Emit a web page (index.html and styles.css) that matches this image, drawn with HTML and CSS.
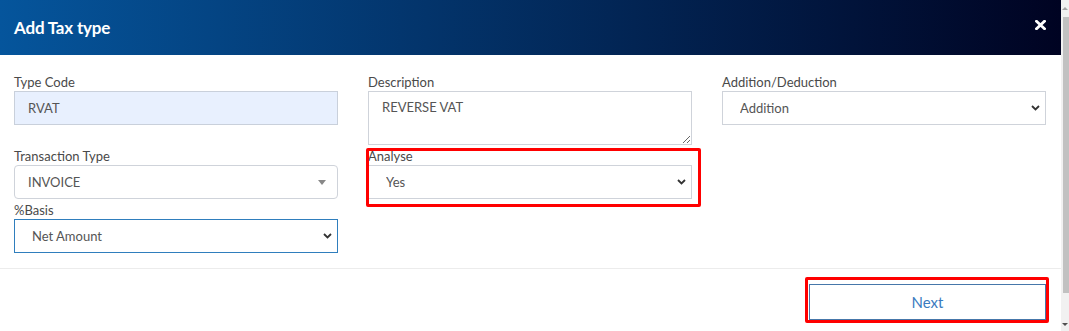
FILE: index.html
```html
<!DOCTYPE html>
<html lang="en">
<head>
    <meta charset="UTF-8">
    <meta name="viewport" content="width=device-width, initial-scale=1.0">
    <title>Add Tax type</title>
    <link rel="stylesheet" href="styles.css">
</head>
<body>
    <div class="page">
        <!-- Modal dialog -->
        <div class="modal">
            <div class="modal-header">
                <h4>Add Tax type</h4>
                <span class="close-btn" title="Close">
                    <svg width="11" height="10" viewBox="0 0 11 10">
                        <path d="M1.5 1.2L9.5 8.8M9.5 1.2L1.5 8.8" stroke="#fff" stroke-width="2.8" stroke-linecap="square"/>
                    </svg>
                </span>
            </div>

            <div class="modal-body">
                <!-- First row of fields -->
                <div class="form-row">
                    <div class="form-group">
                        <label for="typeCode">Type Code</label>
                        <input id="typeCode" class="form-control autofilled" value="RVAT">
                    </div>
                    <div class="form-group">
                        <label for="description">Description</label>
                        <textarea id="description" class="form-control area">REVERSE VAT</textarea>
                    </div>
                    <div class="form-group">
                        <label for="addDed">Addition/Deduction</label>
                        <div class="select-wrap">
                            <select id="addDed" class="form-control select">
                                <option>Addition</option>
                                <option>Deduction</option>
                            </select>
                            <svg class="chevron" width="9" height="6" viewBox="0 0 9 6"><path d="M1 1l3.5 3.5L8 1" fill="none" stroke="#333" stroke-width="1.8"/></svg>
                        </div>
                    </div>
                </div>

                <!-- Second row of fields -->
                <div class="form-row">
                    <div class="form-group">
                        <label>Transaction Type</label>
                        <div class="select2">
                            <span>INVOICE</span>
                            <span class="caret"></span>
                        </div>
                        <label for="basis">%Basis</label>
                        <div class="select-wrap">
                            <select id="basis" class="form-control select focused">
                                <option>Net Amount</option>
                                <option>Gross Amount</option>
                            </select>
                            <svg class="chevron" width="9" height="6" viewBox="0 0 9 6"><path d="M1 1l3.5 3.5L8 1" fill="none" stroke="#333" stroke-width="1.8"/></svg>
                        </div>
                    </div>
                    <div class="form-group marked marked-analyse">
                        <label for="analyse">Analyse</label>
                        <div class="select-wrap">
                            <select id="analyse" class="form-control select">
                                <option>Yes</option>
                                <option>No</option>
                            </select>
                            <svg class="chevron" width="9" height="6" viewBox="0 0 9 6"><path d="M1 1l3.5 3.5L8 1" fill="none" stroke="#333" stroke-width="1.8"/></svg>
                        </div>
                    </div>
                    <div class="form-group"></div>
                </div>
            </div>

            <div class="modal-footer">
                <div class="marked marked-next">
                    <button class="btn-next">Next</button>
                </div>
            </div>
        </div>

        <!-- Page scrollbar -->
        <div class="scrollbar">
            <span class="sb-arrow up"></span>
            <span class="sb-thumb"></span>
            <span class="sb-arrow down"></span>
        </div>
    </div>
</body>
</html>
```

FILE: styles.css
```css
/* Page basics */
body {
    margin: 0;
    font-family: "Lato", "Open Sans", Arial, sans-serif;
    background: #fff;
    overflow: hidden;
}

.page {
    display: flex;
    height: 331px;
}

/* Modal */
.modal {
    flex: 1;
    background: #fff;
}

.modal-header {
    height: 55px;
    box-sizing: border-box;
    padding: 0 15px 0 14px;
    display: flex;
    justify-content: space-between;
    align-items: center;
    background: linear-gradient(to right, #05559c, #000322);
}

.modal-header h4 {
    margin: 0;
    color: #fff;
    font-size: 17px;
    font-weight: bold;
    letter-spacing: -0.2px;
}

.close-btn {
    display: flex;
    margin-top: -6px;
    cursor: pointer;
}

.modal-body {
    padding: 19px 15px 15px 14px;
}

/* Three equal columns */
.form-row {
    display: grid;
    grid-template-columns: repeat(3, 1fr);
    column-gap: 30px;
    align-items: start;
}

.form-row + .form-row {
    margin-top: 3px;
}

label {
    display: block;
    font-size: 13px;
    line-height: 16px;
    padding-bottom: 1px;
    color: #4a4a4a;
}

.form-control {
    display: block;
    width: 100%;
    height: 34px;
    box-sizing: border-box;
    margin: 0;
    padding: 0 13px;
    font-family: inherit;
    font-size: 13px;
    color: #555;
    background: #fff;
    border: 1px solid #cfd3da;
    border-radius: 0;
    outline: none;
}

.autofilled {
    background: #e8f0fe;
    border-color: #c9d0db;
}

.area {
    height: 54px;
    padding-top: 7px;
    line-height: 17px;
    resize: vertical;
}

/* Native selects with a drawn chevron */
.select-wrap {
    position: relative;
}

.select {
    appearance: none;
    -webkit-appearance: none;
    padding-left: 17px;
}

.select.focused {
    border-color: #2f7ebd;
}

.chevron {
    position: absolute;
    right: 6px;
    top: 14px;
    pointer-events: none;
}

/* select2 style box */
.select2 {
    display: flex;
    justify-content: space-between;
    align-items: center;
    height: 34px;
    box-sizing: border-box;
    padding: 0 11px 0 13px;
    font-size: 13px;
    color: #555;
    border: 1px solid #cfd3da;
    border-radius: 4px;
    margin-bottom: 3px;
}

.caret {
    width: 0;
    height: 0;
    border-left: 4px solid transparent;
    border-right: 4px solid transparent;
    border-top: 5px solid #888;
}

/* Footer */
.modal-footer {
    border-top: 1px solid #ececec;
    padding: 15px;
    display: flex;
    justify-content: flex-end;
}

.btn-next {
    display: block;
    width: 237px;
    height: 36px;
    background: #fff;
    border: 1px solid #4677aa;
    color: #3a7bbf;
    font-family: inherit;
    font-size: 15px;
    cursor: pointer;
}

/* Red annotation boxes */
.marked {
    position: relative;
}

.marked::after {
    content: "";
    position: absolute;
    border: 3px solid #f00;
    border-radius: 2px;
    pointer-events: none;
}

.marked-analyse::after {
    top: 0;
    left: -2px;
    right: -9px;
    bottom: -8px;
}

.marked-next::after {
    top: -7px;
    left: -4px;
    right: -3px;
    bottom: -3px;
}

/* Scrollbar on the right */
.scrollbar {
    width: 8px;
    background: #f1f1f1;
    display: flex;
    flex-direction: column;
    align-items: flex-end;
}

.sb-thumb {
    width: 6px;
    height: 276px;
    background: #c1c1c1;
}

.sb-arrow {
    width: 8px;
    height: 17px;
    display: flex;
    justify-content: center;
    align-items: center;
}

.sb-arrow.down {
    margin-top: auto;
    height: 14px;
}

.sb-arrow::before {
    content: "";
    border-left: 3px solid transparent;
    border-right: 3px solid transparent;
}

.sb-arrow.up::before {
    border-bottom: 3px solid #a3a3a3;
}

.sb-arrow.down::before {
    border-top: 3px solid #505050;
}
```
